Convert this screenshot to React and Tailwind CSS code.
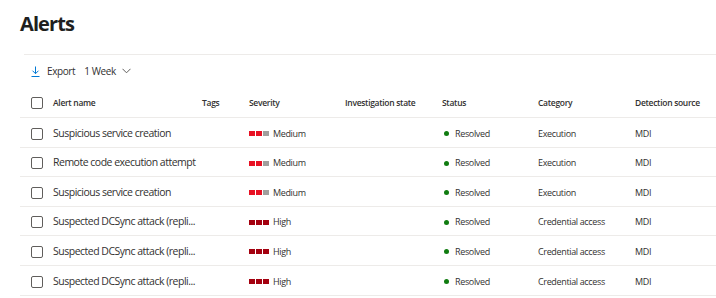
import React from 'react';

const alerts = [
  { name: 'Suspicious service creation', severity: 'Medium', category: 'Execution' },
  { name: 'Remote code execution attempt', severity: 'Medium', category: 'Execution' },
  { name: 'Suspicious service creation', severity: 'Medium', category: 'Execution' },
  { name: 'Suspected DCSync attack (repli...', severity: 'High', category: 'Credential access' },
  { name: 'Suspected DCSync attack (repli...', severity: 'High', category: 'Credential access' },
  { name: 'Suspected DCSync attack (repli...', severity: 'High', category: 'Credential access' },
];

// row heights alternate a little so the dividers land on the same pixels
const rowHeights = ['h-[30px]', 'h-[29px]', 'h-[30px]', 'h-[29px]', 'h-[30px]', 'h-[30px]'];

function Checkbox() {
  return <span className="block w-[12px] h-[12px] rounded-[2px] border border-[#605e5c] bg-white" />;
}

function SeverityBars({ level }) {
  const high = level === 'High';
  return (
    <span className="flex items-center gap-[1px] mr-[4px]">
      <span className={high ? 'w-[6px] h-[5px] bg-[#a4000f]' : 'w-[6px] h-[5px] bg-[#e81123]'} />
      <span className={high ? 'w-[6px] h-[5px] bg-[#a4000f]' : 'w-[6px] h-[5px] bg-[#e81123]'} />
      <span className={high ? 'w-[6px] h-[5px] bg-[#a4000f]' : 'w-[6px] h-[5px] bg-[#a19f9d]'} />
    </span>
  );
}

export default function App() {
  return (
    <div className="w-[716px] h-[298px] overflow-hidden bg-white text-[#323130]" style={{ fontFamily: '"Open Sans", "Noto Sans", sans-serif' }}>
      <h1 className="pl-[20px] pt-[9px] h-[54px] text-[20px] leading-[30px] font-bold tracking-[-0.9px] text-[#201f1e]">Alerts</h1>

      <div className="ml-[24px] border-t border-[#edebe9] h-[33px] flex items-center text-[10px] tracking-[-0.4px]">
        <button type="button" className="flex items-center ml-[7px] text-[#323130]">
          <svg width="9" height="11" viewBox="0 0 9 11" fill="none" stroke="#0078d4" strokeWidth="1">
            <path d="M4.5 0.5v7" />
            <path d="M1.5 4.7l3 3 3-3" />
            <path d="M0.5 10.5h8" />
          </svg>
          <span className="ml-[7px]">Export</span>
        </button>
        <button type="button" className="flex items-center ml-[9px] text-[#323130]">
          <span>1 Week</span>
          <svg className="ml-[6px]" width="9" height="6" viewBox="0 0 9 6" fill="none" stroke="#605e5c" strokeWidth="1">
            <path d="M0.5 0.8l4 4 4-4" />
          </svg>
        </button>
      </div>

      <div className="ml-[20px]">
        <div className="flex items-center h-[31px] pt-[2px] border-b border-[#edebe9] text-[8.5px] font-semibold tracking-[-0.3px] text-[#323130]">
          <div className="w-[33px] pl-[11px]"><Checkbox /></div>
          <div className="w-[149px]">Alert name</div>
          <div className="w-[47px]">Tags</div>
          <div className="w-[96px]">Severity</div>
          <div className="w-[97px]">Investigation state</div>
          <div className="w-[96px]">Status</div>
          <div className="w-[97px]">Category</div>
          <div className="flex-1">Detection source</div>
        </div>

        {alerts.map((a, i) => (
          <div key={i} className={`flex items-center pt-[2px] border-b border-[#edebe9] text-[9px] tracking-[-0.35px] text-[#323130] ${rowHeights[i]}`}>
            <div className="w-[33px] pl-[11px]"><Checkbox /></div>
            <div className="w-[149px] text-[10.5px] tracking-[-0.5px] whitespace-nowrap">{a.name}</div>
            <div className="w-[47px]" />
            <div className="w-[96px] flex items-center">
              <SeverityBars level={a.severity} />
              <span>{a.severity}</span>
            </div>
            <div className="w-[97px]" />
            <div className="w-[96px] flex items-center">
              <span className="ml-[2px] w-[5px] h-[5px] rounded-full bg-[#107c10]" />
              <span className="ml-[6px]">Resolved</span>
            </div>
            <div className="w-[97px]">{a.category}</div>
            <div className="flex-1">MDI</div>
          </div>
        ))}
      </div>
    </div>
  );
}
